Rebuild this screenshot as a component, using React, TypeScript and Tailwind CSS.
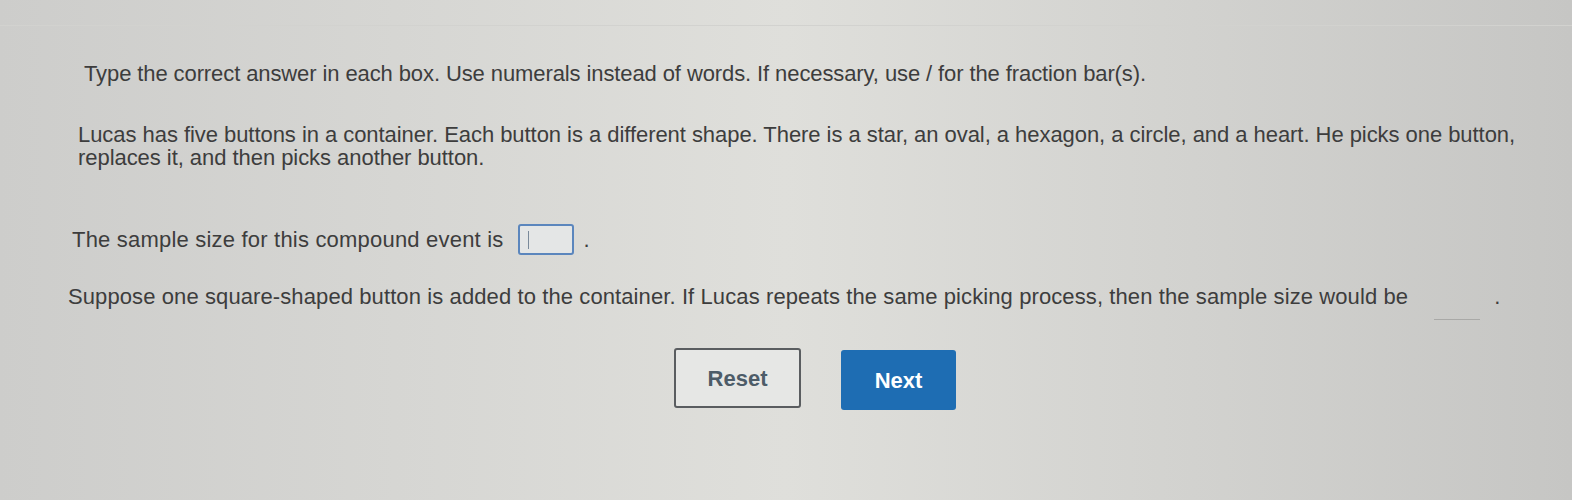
export default function App() {
  return (
    <div
      className="h-[500px] w-[1572px] overflow-hidden bg-linear-to-r from-[#cdcdcb] via-[#dfdfdb] to-[#c6c6c4] text-[#3d3d3d]"
      style={{ fontFamily: '"Liberation Sans", Arial, sans-serif' }}
    >
      <div className="h-[26px] border-b border-[#d2d2cf]" />
      <div className="pt-[36px] text-[22px] leading-[23px]">
        <p className="ml-[84px] tracking-[-0.1px]">
          Type the correct answer in each box. Use numerals instead of words. If necessary, use / for the fraction bar(s).
        </p>
        <p className="ml-[78px] mt-[38px] tracking-[-0.05px]">
          Lucas has five buttons in a container. Each button is a different shape. There is a star, an oval, a hexagon, a circle, and a heart. He picks one button,
          <br />
          replaces it, and then picks another button.
        </p>
        <div className="ml-[72px] mt-[55px] flex items-center tracking-[0.2px]">
          <span>The sample size for this compound event is</span>
          <span className="ml-[14px] flex h-[31px] w-[56px] items-center rounded-[3px] border-2 border-[#5b86bd] bg-[#e4e6e6] pl-[8px]">
            <span className="h-[18px] w-px bg-[#7a8a9a]" />
          </span>
          <span className="ml-[10px]">.</span>
        </div>
        <div className="ml-[68px] mt-[30px] flex items-end tracking-[0.1px]">
          <span>
            Suppose one square-shaped button is added to the container. If Lucas repeats the same picking process, then the sample size would be
          </span>
          <span className="mb-[-12px] ml-[26px] h-px w-[46px] bg-[#a9a9a7]" />
          <span className="ml-[14px]">.</span>
        </div>
      </div>
      <div className="mt-[40px] flex items-start pl-[674px]">
        <button className="h-[60px] w-[127px] rounded-[3px] border-2 border-[#5a5d60] bg-[#e6e7e5] text-[22px] font-bold text-[#4d5c68]">
          Reset
        </button>
        <button className="ml-[40px] mt-[2px] h-[60px] w-[115px] rounded-[3px] bg-[#1e6db3] text-[22px] font-bold text-white">
          Next
        </button>
      </div>
    </div>
  );
}
